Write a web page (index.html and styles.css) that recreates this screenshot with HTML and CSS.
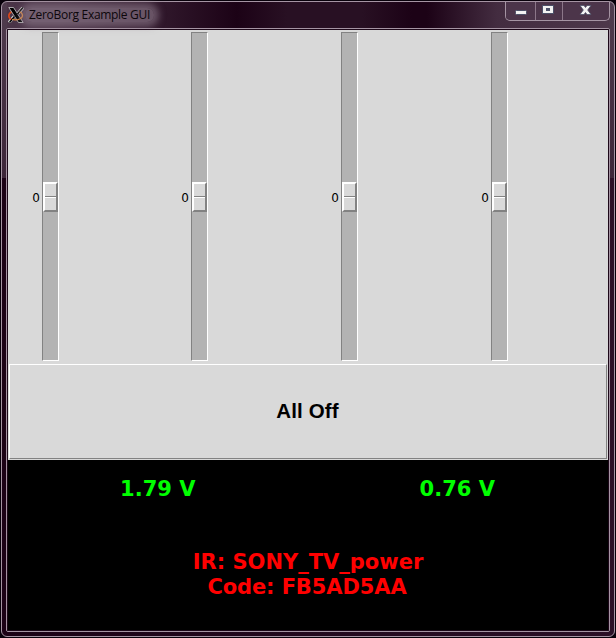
FILE: index.html
```html
<!DOCTYPE html>
<html lang="en">
<head>
<meta charset="utf-8">
<title>ZeroBorg Example GUI</title>
<link rel="stylesheet" href="styles.css">
</head>
<body>
<div class="window">
  <header class="titlebar">
    <svg class="app-icon" width="16" height="16" viewBox="0 0 16 16">
      <path d="M15 0.500L10 6.500M6 9.500L1 15.500" stroke="#ccc" stroke-width="3.200"/>
      <path d="M4 4.500C-.5 7 0 11.500 4 12.500" fill="none" stroke="#d8481c" stroke-width="1.600"/>
      <path d="M.8.500H5.500L15.200 15.500H10.500Z" fill="#000" stroke="#ccc" stroke-width=".8"/>
      <path d="M15 .500L9.500 7M6.500 9.500L1.500 15.500" stroke="#000" stroke-width="1.500"/>
      <path d="M4 12.500C10 14 15 11 14.500 8C14 6 13 5 11.500 5" fill="none" stroke="#e08a3a" stroke-width="1.200"/>
    </svg>
    <h1 class="title">ZeroBorg Example GUI</h1>
    <div class="controls">
      <span class="control"><svg width="28" height="17" viewBox="0 0 28 17"><rect x="8.500" y="8.500" width="11" height="4" rx="1" fill="#f2f2f2" stroke="#4c5068"/></svg></span>
      <span class="control"><svg width="26" height="17" viewBox="0 0 26 17"><path d="M6 3h12v9H6z" fill="#4c5068"/><path fill-rule="evenodd" d="M7 4h10v7H7zM10 6v3h4V6z" fill="#f2f2f2"/></svg></span>
      <span class="control"><svg width="46" height="17" viewBox="0 0 46 17"><path d="M17 3.500h4l1.500 2 1.500-2h4L24.700 8l3.300 4.500h-4l-1.500-2-1.500 2h-4L20.300 8z" fill="#f2f2f2" stroke="#4c5068" stroke-width=".8"/></svg></span>
    </div>
  </header>
  <main class="client">
    <section class="scales">
      <div class="scale"><span class="value">0</span><div class="trough"><div class="slider"></div></div></div>
      <div class="scale"><span class="value">0</span><div class="trough"><div class="slider"></div></div></div>
      <div class="scale"><span class="value">0</span><div class="trough"><div class="slider"></div></div></div>
      <div class="scale"><span class="value">0</span><div class="trough"><div class="slider"></div></div></div>
    </section>
    <div class="button-row"><button class="all-off">All Off</button></div>
    <section class="voltages"><span>1.79 V</span><span>0.76 V</span></section>
    <section class="infrared"><div>IR: SONY_TV_power</div><div class="code">Code: FB5AD5AA</div></section>
  </main>
</div>
</body>
</html>
```
FILE: styles.css
```css
* { box-sizing: border-box; }
body { margin: 0; background: #08000a; overflow: hidden; }
.window {
  width: 614px; height: 636px; margin: 1px;
  border: 1px solid #a594a3; border-radius: 6px;
  padding: 0 4px 4px;
  background:
    linear-gradient(#503c4e, #3d2639) 0 0 / 5px 176px no-repeat,
    linear-gradient(#503c4e, #3d2639) 100% 0 / 5px 176px no-repeat,
    linear-gradient(90deg, #4a3447 0, #4a3447 60px, #1c0216 235px, #281023 285px, #281023 360px, #1c0216 410px, #1c0216 425px, #432c40 495px, #4e384b 614px) 0 0 / 100% 27px no-repeat,
    linear-gradient(90deg, #1c0216, #2c1027);
}
.titlebar { height: 26px; display: flex; align-items: flex-start; padding-left: 2px; }
.app-icon { margin-top: 5px; flex: none; }
.title {
  margin: 6px 0 0 1px; padding: 0 4px; height: 14px;
  font: 400 12px/14px "Open Sans", sans-serif; letter-spacing: -0.3px; white-space: nowrap;
  color: #0c070b; background: rgba(150, 132, 148, .55); border-radius: 7px;
  box-shadow: 0 0 7px 5px rgba(150, 132, 148, .55);
}
.controls {
  display: flex; height: 19px; margin-left: auto;
  border: 1px solid #a594a3; border-top: 0; border-radius: 0 0 5px 5px;
  background: #4c354a; overflow: hidden;
}
.control { display: flex; border-left: 1px solid #8c7789; }
.control:first-child { border-left-color: #4c354a; }
.client {
  width: 604px; height: 604px; border: 1px solid #a594a3; border-radius: 2px;
  outline: 1px solid #1c0718; outline-offset: -2px;
  padding: 1px; background: #000;
}
.scales { height: 333px; background: #d9d9d9; display: grid; grid-template-columns: 149px 150px 150px 151px; }
.scale { display: flex; padding: 2px 0 0; }
.value { width: 34px; padding-right: 2px; text-align: right; font: 12px/16px "DejaVu Sans", sans-serif; margin-top: 158px; color: #000; }
.trough {
  width: 17px; height: 329px; background: #b3b3b3; padding-top: 149px;
  border: 1px solid; border-color: #828282 #fff #fff #828282;
}
.slider {
  width: 15px; height: 30px;
  background: linear-gradient(#828282 1px, #fff 1px) 0 12px / 100% 2px no-repeat, #d9d9d9;
  border: 2px solid; border-color: #fff #828282 #828282 #fff;
}
.button-row { height: 97px; padding: 1px 0 1px 1px; background: #d9d9d9; }
.all-off {
  display: block; width: 598px; height: 95px; background: #d9d9d9; color: #000;
  border: 1px solid; border-color: #fff #828282 #828282 #fff; border-radius: 0; padding: 0 1px 2px 0;
  font: bold 20.5px "Liberation Sans", sans-serif; letter-spacing: .15px;
}
.voltages { display: grid; grid-template-columns: 1fr 1fr; height: 58px; margin-right: 1px; text-align: center; font: bold 21px/59px "DejaVu Sans", sans-serif; color: #0f0; }
.infrared { padding-top: 32px; text-align: center; font: bold 21px/25px "DejaVu Sans", sans-serif; color: #f00; }
.code { letter-spacing: -.1px; padding-right: 2px; }
```
